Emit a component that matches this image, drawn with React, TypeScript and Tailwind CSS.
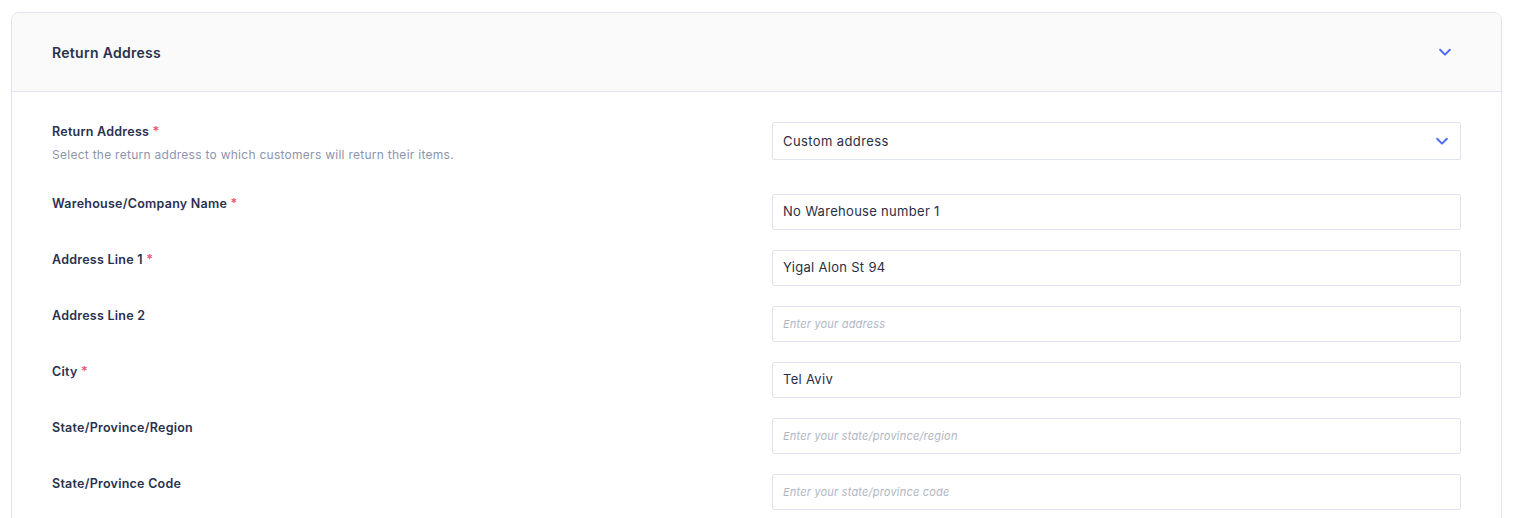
import React from "react";

const Chevron = ({ className }: { className?: string }) => (
  <svg className={className} width="18" height="18" viewBox="0 0 24 24" fill="none" stroke="currentColor" strokeWidth="2.6" strokeLinecap="round" strokeLinejoin="round">
    <path d="M5.5 9l6.5 6.5L18.5 9" />
  </svg>
);

type Row = { label: string; required?: boolean; value?: string; placeholder?: string };

const rows: Row[] = [
  { label: "Warehouse/Company Name", required: true, value: "No Warehouse number 1" },
  { label: "Address Line 1", required: true, value: "Yigal Alon St 94" },
  { label: "Address Line 2", placeholder: "Enter your address" },
  { label: "City", required: true, value: "Tel Aviv" },
  { label: "State/Province/Region", placeholder: "Enter your state/province/region" },
  { label: "State/Province Code", placeholder: "Enter your state/province code" },
];

const Label = ({ text, required }: { text: string; required?: boolean }) => (
  <div className="text-[12.5px] font-semibold leading-[18px] tracking-[0.25px] text-[#2a3150]">
    {text}
    {required && <span className="text-[#f0506e]"> *</span>}
  </div>
);

export default function App() {
  return (
    <div className="min-h-[518px] bg-white pt-[12px] pl-[11px] pr-[11px]" style={{ fontFamily: "Inter, 'Noto Sans', sans-serif" }}>
      <div className="rounded-t-[8px] border border-[#e1e4f0] overflow-hidden">
        <div className="flex h-[79px] items-center justify-between border-b border-[#e1e4f0] bg-[#fafafa] pl-[40px] pr-[47px]">
          <div className="text-[14px] font-semibold tracking-[0.3px] text-[#2a3150]">Return Address</div>
          <Chevron className="text-[#4d6cf4]" />
        </div>
        <div className="px-[40px] pt-[30px] pb-[8px]">
          <div className="flex items-start">
            <div className="w-[720px] pt-[1px]">
              <Label text="Return Address" required />
              <div className="mt-[5px] text-[12px] leading-[18px] tracking-[0.27px] text-[#8e94ad]">
                Select the return address to which customers will return their items.
              </div>
            </div>
            <div className="flex h-[38px] flex-1 items-center justify-between border border-[#dfe2f1] rounded-[2px] pl-[10px] pr-[9px]">
              <span className="pt-[1px] text-[13px] tracking-[0.4px] text-[#2b2f45]">Custom address</span>
              <Chevron className="text-[#4d6cf4]" />
            </div>
          </div>
          <div className="mt-[30px] flex flex-col gap-[20px]">
            {rows.map((r) => (
              <div key={r.label} className="flex">
                <div className="w-[720px] pt-[1px]">
                  <Label text={r.label} required={r.required} />
                </div>
                <div className="flex h-[36px] flex-1 items-center border border-[#dfe2f1] rounded-[2px] pl-[10px]">
                  {r.value ? (
                    <span className="text-[13px] tracking-[0.3px] text-[#2b2f45]">{r.value}</span>
                  ) : (
                    <span className="text-[11px] italic tracking-[0.2px] text-[#b2b6c4]">{r.placeholder}</span>
                  )}
                </div>
              </div>
            ))}
          </div>
        </div>
      </div>
    </div>
  );
}
